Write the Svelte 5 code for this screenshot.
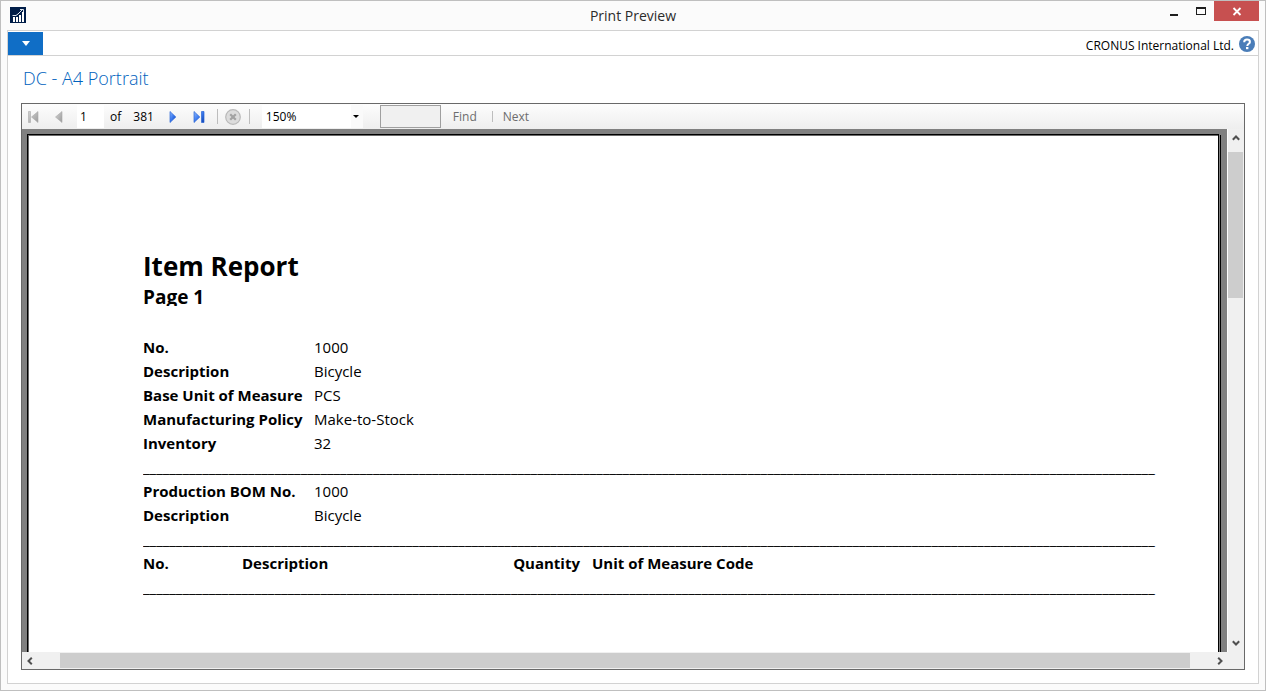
<script>
  let page = $state('1');
  let zoom = $state('150%');
  let query = $state('');
  const total = 381;
  const zoomLevels = ['50%', '75%', '100%', '150%', '200%'];
  const item = [
    ['No.', '1000'],
    ['Description', 'Bicycle'],
    ['Base Unit of Measure', 'PCS'],
    ['Manufacturing Policy', 'Make-to-Stock'],
    ['Inventory', '32']
  ];
  const bom = [
    ['Production BOM No.', '1000'],
    ['Description', 'Bicycle']
  ];
  const rule = '_'.repeat(154);
</script>

{#snippet fields(rows)}
  <dl>
    {#each rows as [name, value]}
      <dt>{name}</dt>
      <dd>{value}</dd>
    {/each}
  </dl>
{/snippet}

<div class="window">
  <header class="titlebar">
    <svg class="app-icon" width="16" height="16" viewBox="0 0 16 16" aria-hidden="true">
      <rect width="16" height="16" fill="#001d48" />
      <path d="M3 10h2v5H3zM6 10h2v5H6zM9 8h2v7H9zM12 5h2v10h-2z" fill="#fff" />
      <path d="M2.500 8.500H6L8 7L12.500 2.500M10 2.500H13.500V5" fill="none" stroke="#dfe6ef" stroke-width="1" />
    </svg>
    <h1>Print Preview</h1>
    <div class="window-buttons">
      <button aria-label="Minimize">
        <svg width="10" height="10" viewBox="0 0 10 10"><path d="M1 8h8v2H1z" fill="#1e1e1e" /></svg>
      </button>
      <button aria-label="Maximize">
        <svg width="10" height="10" viewBox="0 0 10 10"><path fill-rule="evenodd" d="M0 1h10v8H0zM1 3v5h8V3z" fill="#1e1e1e" /></svg>
      </button>
      <button class="close" aria-label="Close">
        <svg width="10" height="10" viewBox="0 0 10 10"><path d="M1.500 2l7 7M8.500 2l-7 7" stroke="#fff" stroke-width="1.800" /></svg>
      </button>
    </div>
  </header>

  <main>
    <nav class="ribbon">
      <button class="menu" aria-label="Application menu">
        <svg width="8" height="5" viewBox="0 0 8 5"><path d="M0 0h8L4 5z" fill="#fff" /></svg>
      </button>
      <span class="company">CRONUS International Ltd.</span>
      <button class="help" aria-label="Help">
        <svg width="16" height="16" viewBox="0 0 16 16">
          <circle cx="8" cy="8" r="8" fill="#4a7db8" />
          <path d="M5.200 6.300C5.200 4.400 6.400 3.600 8 3.600s2.900.9 2.900 2.300C10.900 7.800 8.300 7.800 8.300 9.900" fill="none" stroke="#fff" stroke-width="2" />
          <rect x="7" y="11" width="2.400" height="2.200" fill="#fff" />
        </svg>
      </button>
    </nav>

    <h2>DC - A4 Portrait</h2>

    <section class="viewer" aria-label="Report viewer">
      <div class="toolbar">
        <svg width="0" height="0" class="defs" aria-hidden="true">
          <defs>
            <linearGradient id="blue" x1="0" y1="0" x2="1" y2="1">
              <stop offset="0" stop-color="#8fbaff" /><stop offset=".5" stop-color="#3a78ee" /><stop offset="1" stop-color="#0c40ae" />
            </linearGradient>
            <linearGradient id="gray" x1="0" y1="0" x2="1" y2="1">
              <stop offset="0" stop-color="#d2d2d2" /><stop offset="1" stop-color="#9b9b9b" />
            </linearGradient>
          </defs>
        </svg>
        <button class="first" disabled aria-label="First page">
          <svg width="12" height="12" viewBox="0 0 12 12"><path d="M1.500 .5h2v11h-2zM11 .5v11L4.500 6z" fill="url(#gray)" stroke="#aaa" stroke-width=".6" /></svg>
        </button>
        <button class="previous" disabled aria-label="Previous page">
          <svg width="12" height="12" viewBox="0 0 12 12"><path d="M9 .5v11L2.500 6z" fill="url(#gray)" stroke="#aaa" stroke-width=".6" /></svg>
        </button>
        <input class="page-number" aria-label="Current page" bind:value={page} />
        <span class="of">of</span>
        <span class="total">{total}</span>
        <button class="next" aria-label="Next page">
          <svg width="12" height="12" viewBox="0 0 12 12"><path d="M3 .5v11L8.800 6z" fill="url(#blue)" stroke="#2a64d4" stroke-width=".7" /></svg>
        </button>
        <button class="last" aria-label="Last page">
          <svg width="12" height="12" viewBox="0 0 12 12"><path d="M1 .5v11L6.800 6zM8.500 .5h2.500v11H8.500z" fill="url(#blue)" stroke="#2a64d4" stroke-width=".7" /></svg>
        </button>
        <i class="separator"></i>
        <button class="stop" disabled aria-label="Stop rendering">
          <svg width="16" height="16" viewBox="0 0 16 16">
            <circle cx="8" cy="8" r="7.300" fill="#dcdcdc" stroke="#b9b9b9" stroke-width="1.200" />
            <path d="M5.200 5.200l5.600 5.600M10.800 5.200l-5.600 5.600" stroke="#a2a2a2" stroke-width="2.200" />
          </svg>
        </button>
        <i class="separator"></i>
        <label class="zoom">
          <select aria-label="Zoom" bind:value={zoom}>
            {#each zoomLevels as level}<option>{level}</option>{/each}
          </select>
          <svg width="6" height="3" viewBox="0 0 6 3" aria-hidden="true"><path d="M0 0h6L3 3z" /></svg>
        </label>
        <input class="search" aria-label="Find text in report" bind:value={query} />
        <button class="text" disabled>Find</button>
        <i class="separator short"></i>
        <button class="text" disabled>Next</button>
      </div>

      <div class="canvas">
        <div class="backdrop">
          <article class="sheet">
            <h3>Item Report</h3>
            <p class="page-label">Page 1</p>
            {@render fields(item)}
            <p class="rule">{rule}</p>
            {@render fields(bom)}
            <p class="rule">{rule}</p>
            <table>
              <thead>
                <tr>
                  <th class="no">No.</th>
                  <th class="description">Description</th>
                  <th class="quantity">Quantity</th>
                  <th>Unit of Measure Code</th>
                </tr>
              </thead>
            </table>
            <p class="rule">{rule}</p>
          </article>
        </div>
        <div class="vertical bar">
          <button aria-label="Scroll up"><svg width="8" height="6" viewBox="0 0 8 6"><path d="M.8 4.800L4 1.500l3.200 3.300" /></svg></button>
          <div class="track"><div class="thumb"></div></div>
          <button aria-label="Scroll down"><svg width="8" height="6" viewBox="0 0 8 6"><path d="M.8 1.200L4 4.500l3.200-3.300" /></svg></button>
        </div>
        <div class="horizontal bar">
          <button aria-label="Scroll left"><svg width="6" height="8" viewBox="0 0 6 8"><path d="M4.800.8L1.500 4l3.300 3.200" /></svg></button>
          <div class="track"><div class="thumb"></div></div>
          <button aria-label="Scroll right"><svg width="6" height="8" viewBox="0 0 6 8"><path d="M1.200.8L4.500 4 1.200 7.200" /></svg></button>
        </div>
      </div>
    </section>
  </main>
</div>

<style>
  :global(body) {
    font-family: 'Open Sans', 'Noto Sans', sans-serif;
    font-size: 12px;
    color: #000;
  }
  * {
    box-sizing: border-box;
  }
  h1, h2, h3, p, dl, dd {
    margin: 0;
  }
  button {
    display: flex;
    align-items: center;
    justify-content: center;
    padding: 0;
    border: 0;
    background: none;
    font: inherit;
    flex: none;
  }
  input, select {
    font: inherit;
    color: inherit;
    border: 0;
    border-radius: 0;
    min-width: 0;
  }
  svg {
    display: block;
    flex: none;
  }

  .window {
    display: flex;
    flex-direction: column;
    height: 100vh;
    padding: 0 6px 6px;
    border: 1px solid #bfbfbf;
    background: #fbfbfb;
  }
  .titlebar {
    display: grid;
    grid-template-columns: 1fr auto 1fr;
    flex: none;
    height: 29px;
  }
  .app-icon {
    margin: 6px 0 0 3px;
  }
  h1 {
    font-size: 14px;
    font-weight: 400;
    line-height: 29px;
    color: #2b2b2b;
  }
  .window-buttons {
    display: flex;
    justify-content: flex-end;
  }
  .window-buttons button {
    width: 27px;
    height: 20px;
  }
  .window-buttons .close {
    width: 45px;
    background: #c75050;
  }

  main {
    display: flex;
    flex-direction: column;
    flex: 1;
    min-height: 0;
    padding-bottom: 13px;
    border: 1px solid #d2d2d2;
    background: #fff;
  }
  .ribbon {
    display: flex;
    align-items: center;
    flex: none;
    height: 25px;
    padding: 1px 3px 0 0;
    border-bottom: 1px solid #d2d2d2;
  }
  .menu {
    width: 35px;
    height: 23px;
    background: #106ec6;
  }
  .company {
    margin-left: auto;
    padding-top: 4px;
    line-height: 19px;
  }
  .help {
    margin-left: 5px;
  }
  h2 {
    padding: 10px 15px 13px;
    font-size: 18px;
    font-weight: 300;
    line-height: 24px;
    color: #0062bd;
  }

  .viewer {
    display: flex;
    flex-direction: column;
    flex: 1;
    min-height: 0;
    margin: 0 13px;
    border: 1px solid #696969;
  }
  .toolbar {
    display: flex;
    align-items: center;
    flex: none;
    height: 25px;
    background: linear-gradient(#fdfdfd, #eeeeee);
  }
  .defs {
    position: absolute;
  }
  .first {
    margin-left: 5px;
  }
  .previous {
    margin-left: 14px;
  }
  .page-number {
    width: 27px;
    height: 23px;
    margin-left: 12px;
    padding: 0 3px;
    background: #fff;
  }
  .of {
    margin-left: 6px;
  }
  .total {
    margin-left: 12px;
  }
  .next {
    margin-left: 13px;
  }
  .last {
    margin-left: 14px;
  }
  .separator {
    width: 1px;
    height: 15px;
    margin: 0 7px 0 12px;
    background: #bdbdbd;
  }
  .stop + .separator {
    margin: 0 12px 0 8px;
  }
  .separator.short {
    height: 11px;
    margin: 0 10px 0 15px;
  }
  .zoom {
    display: flex;
    align-items: center;
    width: 101px;
    height: 23px;
    padding-right: 4px;
    background: linear-gradient(to right, #fff 89px, #fafafa 89px);
  }
  .zoom select {
    flex: 1;
    height: 23px;
    padding: 0 4px;
    appearance: none;
    background: none;
  }
  .search {
    width: 61px;
    height: 23px;
    margin: 0 12px 0 17px;
    border: 1px solid #9f9f9f;
    background: #f0f0f0;
  }
  .text {
    color: #6d6d6d;
  }

  .canvas {
    display: grid;
    grid-template: minmax(0, 1fr) 17px / minmax(0, 1fr) 16px;
    flex: 1;
    min-height: 0;
    background: #f0f0f0;
  }
  .backdrop {
    overflow: hidden;
    padding: 5px 8px 0 5px;
    border-right: 1px solid #fff;
    background: #808080;
  }
  .sheet {
    height: 100%;
    padding: 113px 60px 0 115px;
    border: 1px solid #000;
    border-bottom: 0;
    box-shadow: 1px 0 #808080, 2px 1px #000, inset 1px 1px #696969;
    background: #fff;
    font-size: 15px;
    line-height: 24px;
  }
  h3 {
    font-size: 26px;
    line-height: 36px;
  }
  .page-label {
    height: 22px;
    margin-bottom: 29px;
    overflow: hidden;
    font-size: 19px;
    font-weight: 700;
    line-height: 26px;
  }
  dl {
    display: grid;
    grid-template-columns: 171px 1fr;
    white-space: nowrap;
  }
  dt {
    font-weight: 700;
  }
  .rule {
    height: 24px;
    overflow: hidden;
    white-space: nowrap;
  }
  table {
    border-collapse: collapse;
  }
  th {
    padding: 0;
    text-align: left;
    white-space: nowrap;
  }
  .no {
    width: 99px;
  }
  .description {
    width: 240px;
  }
  .quantity {
    width: 110px;
    padding-right: 12px;
    text-align: right;
  }

  .bar {
    display: flex;
  }
  .bar path {
    fill: none;
    stroke: #505050;
    stroke-width: 2;
  }
  .track {
    flex: 1;
  }
  .thumb {
    background: #cdcdcd;
  }
  .vertical {
    flex-direction: column;
    padding-right: 1px;
  }
  .vertical button {
    height: 18px;
  }
  .vertical .thumb {
    height: 30%;
    margin-top: 5px;
  }
  .horizontal {
    padding-top: 1px;
  }
  .horizontal button {
    width: 16px;
  }
  .horizontal .track {
    padding: 0 22px;
  }
  .horizontal .thumb {
    height: 15px;
  }
</style>
